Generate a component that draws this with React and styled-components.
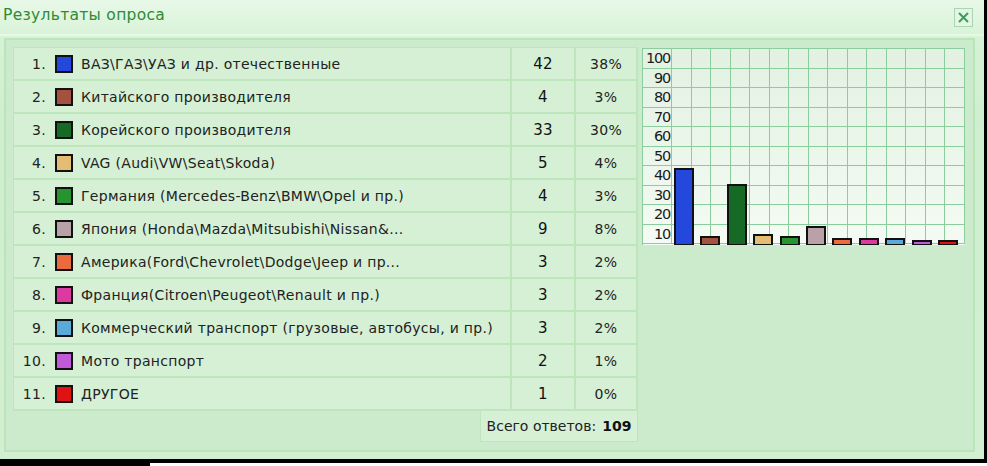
import React from "react";
import styled, { createGlobalStyle } from "styled-components";

const Global = createGlobalStyle`
  html, body { margin: 0; padding: 0; background: #000; }
  body { width: 987px; height: 466px; overflow: hidden; font-family: "DejaVu Sans", Verdana, sans-serif; }
`;

const data = [
  { label: "ВАЗ\\ГАЗ\\УАЗ и др. отечественные", n: 42, p: 38, c: "#2447dc" },
  { label: "Китайского производителя", n: 4, p: 3, c: "#a4513f" },
  { label: "Корейского производителя", n: 33, p: 30, c: "#176a26" },
  { label: "VAG (Audi\\VW\\Seat\\Skoda)", n: 5, p: 4, c: "#e3bd73" },
  { label: "Германия (Mercedes-Benz\\BMW\\Opel и пр.)", n: 4, p: 3, c: "#26952f" },
  { label: "Япония (Honda\\Mazda\\Mitsubishi\\Nissan&...", n: 9, p: 8, c: "#b9a1a8" },
  { label: "Америка(Ford\\Chevrolet\\Dodge\\Jeep и пр...", n: 3, p: 2, c: "#ec6b3c" },
  { label: "Франция(Citroen\\Peugeot\\Renault и пр.)", n: 3, p: 2, c: "#dc3aa0" },
  { label: "Коммерческий транспорт (грузовые, автобусы, и пр.)", n: 3, p: 2, c: "#5aaad9" },
  { label: "Мото транспорт", n: 2, p: 1, c: "#c05ad9" },
  { label: "ДРУГОЕ", n: 1, p: 0, c: "#e01212" },
];

const Window = styled.div`
  width: 984px;
  height: 459px;
  box-sizing: border-box;
  background: linear-gradient(#e8f8e8 0px, #d6f2d6 40px, #cfeecf 120px, #d2efd2 100%);
  display: flex;
  flex-direction: column;
`;

const Header = styled.div`
  height: 34px;
  display: flex;
  align-items: center;
  justify-content: space-between;
  padding: 0 11px 0 3px;
  border-bottom: 2px solid #e6f8e6;
`;

const Title = styled.div`
  color: #2e8b34;
  font-size: 15.5px;
  letter-spacing: 0.3px;
  margin-top: -4px;
`;

const Close = styled.div`
  width: 17px;
  height: 17px;
  border: 1px solid #a9d6b2;
  background: #e3f6e3;
  display: flex;
  align-items: center;
  justify-content: center;
  margin-top: 1px;
`;

const Panel = styled.div`
  margin: 2px 9px 7px 4px;
  flex: 1;
  border: 2px solid #b9e5b9;
  padding: 7px 0 0 8px;
  display: flex;
  gap: 4px;
  background: #ccebcc;
`;

const Left = styled.div`
  width: 624px;
  display: flex;
  flex-direction: column;
  align-items: flex-end;
`;

const Table = styled.div`
  width: 624px;
  display: grid;
  grid-template-columns: 498px 64px 62px;
  border-top: 1px solid #bde6bd;
  border-left: 1px solid #bde6bd;
`;

const Cell = styled.div`
  height: 33px;
  box-sizing: border-box;
  background: #d5f0d5;
  border-right: 2px solid #bde6bd;
  border-bottom: 2px solid #bde6bd;
  display: flex;
  align-items: center;
  justify-content: ${(p) => (p.$center ? "center" : "flex-start")};
  font-size: ${(p) => (p.$dark ? "15px" : "14px")};
  letter-spacing: 0.3px;
  color: ${(p) => (p.$dark ? "#111" : "#222")};
  white-space: nowrap;
  overflow: hidden;
`;

const Index = styled.span`
  width: 32px;
  text-align: right;
  margin-right: 9px;
`;

const Swatch = styled.span`
  width: 14px;
  height: 14px;
  border: 2px solid #111;
  background: ${(p) => p.$c};
  margin-right: 8px;
  flex: none;
`;

const Total = styled.div`
  width: 158px;
  height: 31px;
  box-sizing: border-box;
  background: #d5f0d5;
  border: 1px solid #bde6bd;
  border-top: none;
  display: flex;
  align-items: center;
  justify-content: center;
  font-size: 14px;
  color: #222;
  white-space: nowrap;
  b { margin-left: 6px; color: #111; }
`;

const Chart = styled.div`
  position: relative;
  margin-top: 1px;
  width: 322px;
  height: 196px;
  display: grid;
  grid-template-columns: 29px repeat(15, 19.5px);
  grid-template-rows: repeat(10, 19.5px);
  border-top: 1px solid #8bcd9c;
  border-left: 1px solid #8bcd9c;
  background: linear-gradient(#e2f1e2, #f4fbf4);
`;

const GridCell = styled.div`
  border-right: 1px solid #8bcd9c;
  border-bottom: 1px solid #8bcd9c;
  box-sizing: border-box;
`;

const AxisLabel = styled(GridCell)`
  font-size: 14.5px;
  color: #1a1a1a;
  text-align: right;
  padding-right: 1px;
  line-height: 19px;
  letter-spacing: -1.2px;
  overflow: hidden;
`;

const Bar = styled.div`
  position: absolute;
  bottom: 0;
  width: 20px;
  box-sizing: border-box;
  border: 2px solid #111;
  border-bottom-width: 1px;
  background: ${(p) => p.$c};
`;

const BottomLine = styled.div`
  margin: 4px 0 0 150px;
  height: 3px;
  background: #fff;
`;

export default function App() {
  const labels = [100, 90, 80, 70, 60, 50, 40, 30, 20, 10];
  return (
    <>
      <Global />
      <Window>
        <Header>
          <Title>Результаты опроса</Title>
          <Close>
            <svg width="13" height="13" viewBox="0 0 13 13">
              <path d="M2 2 L11 11 M11 2 L2 11" stroke="#3d9c5c" strokeWidth="2" />
            </svg>
          </Close>
        </Header>
        <Panel>
          <Left>
            <Table>
              {data.map((d, i) => (
                <React.Fragment key={i}>
                  <Cell>
                    <Index>{i + 1}.</Index>
                    <Swatch $c={d.c} />
                    {d.label}
                  </Cell>
                  <Cell $center $dark>{d.n}</Cell>
                  <Cell $center>{d.p}%</Cell>
                </React.Fragment>
              ))}
            </Table>
            <Total>
              Всего ответов: <b>109</b>
            </Total>
          </Left>
          <Chart>
            {labels.map((l) => (
              <React.Fragment key={l}>
                <AxisLabel>{l}</AxisLabel>
                {Array.from({ length: 15 }).map((_, j) => (
                  <GridCell key={j} />
                ))}
              </React.Fragment>
            ))}
            {data.map((d, i) => (
              <Bar
                key={i}
                $c={d.c}
                style={{
                  left: 31 + i * 26.4 + "px",
                  height: Math.max(d.p * 1.95 + 3, 5) + "px",
                }}
              />
            ))}
          </Chart>
        </Panel>
      </Window>
      <BottomLine />
    </>
  );
}
